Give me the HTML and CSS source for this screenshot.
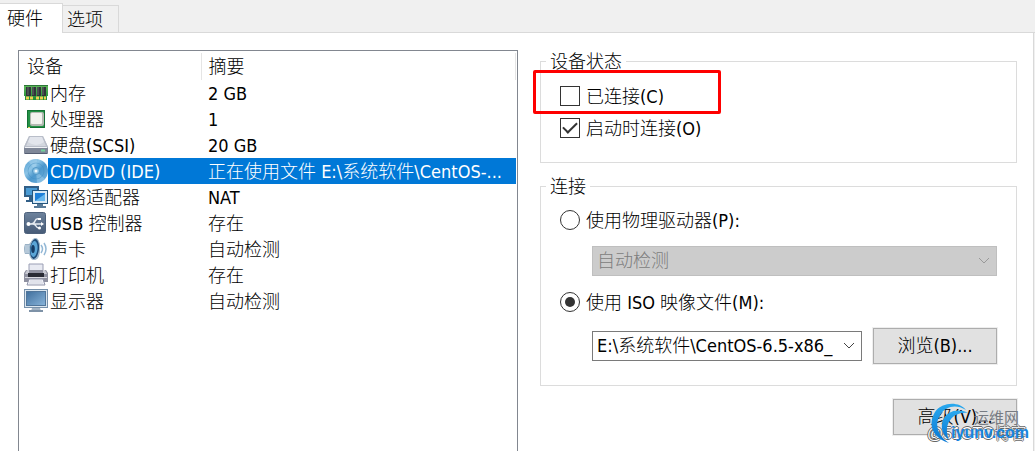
FILE: index.html
```html
<!DOCTYPE html>
<html lang="zh-CN">
<head>
<meta charset="utf-8">
<title>虚拟机设置</title>
<link rel="stylesheet" href="styles.css">
</head>
<body>
<svg class="defs" aria-hidden="true">
  <defs>
    <linearGradient id="gGreen" x1="0" y1="0" x2="0" y2="1"><stop offset="0" stop-color="#5fb85a"/><stop offset="1" stop-color="#1c8a34"/></linearGradient>
    <linearGradient id="gSilver" x1="0" y1="0" x2="0" y2="1"><stop offset="0" stop-color="#d3d7e0"/><stop offset="1" stop-color="#9298a8"/></linearGradient>
    <linearGradient id="gDisc" x1="0" y1="0" x2="1" y2="1"><stop offset="0" stop-color="#4f9bd0"/><stop offset=".35" stop-color="#8cc4e6"/><stop offset=".55" stop-color="#4c97cc"/><stop offset="1" stop-color="#77b6df"/></linearGradient>
    <linearGradient id="gScreen" x1="0" y1="0" x2="1" y2="1"><stop offset="0" stop-color="#42719f"/><stop offset="1" stop-color="#86b2d8"/></linearGradient>
    <linearGradient id="gUsb" x1="0" y1="0" x2="0" y2="1"><stop offset="0" stop-color="#6d829c"/><stop offset="1" stop-color="#465b77"/></linearGradient>
    <linearGradient id="gLogo" x1="0" y1="0" x2="0" y2="1"><stop offset="0" stop-color="#2aa9ee"/><stop offset="1" stop-color="#0877d4"/></linearGradient>
  </defs>
</svg>
<div class="dialog">
  <div class="tabs" role="tablist">
    <button class="tab tab-active" type="button" role="tab" aria-selected="true">硬件</button>
    <button class="tab" type="button" role="tab" aria-selected="false">选项</button>
  </div>
  <main class="panel">
    <section class="devices">
      <table class="device-table">
        <thead><tr><th class="col-device">设备</th><th>摘要</th></tr></thead>
        <tbody>
          <tr><td><div class="device"><svg class="icon" viewBox="0 0 24 24"><path d="M0 4h24v11h-1v4H1v-4H0z" fill="url(#gGreen)"/><path d="M0 4.500h24" stroke="#2c7637"/><path d="M2 6h5v9H2zM8 6h4v9H8zM13 6h4v9h-4zM18 6h4v9h-4z" fill="#30343a"/><path d="M4 6v8M9 6v8M14 6v8M19 6v8" stroke="#666d6a"/><path d="M2 17h8M12 17h10" stroke="#efcf52" stroke-width="3" stroke-dasharray="3 1"/></svg><span class="name">内存</span></div></td><td>2 GB</td></tr>
          <tr><td><div class="device"><svg class="icon" viewBox="0 0 24 24"><path d="M3 3h18v18H3z" fill="#249146"/><path d="M3.500 3.500h17v17h-17z" fill="none" stroke="#137133"/><path d="M4 20h2v1H4z" fill="#ead965"/><rect x="6" y="5" width="14" height="14" rx="2" fill="#b3bab2"/><rect x="7" y="6" width="11" height="11" rx="1" fill="#f2f3ef"/></svg><span class="name">处理器</span></div></td><td>1</td></tr>
          <tr><td><div class="device"><svg class="icon" viewBox="0 0 24 24"><path d="M5 3h14l5 11v7H0v-7z" fill="url(#gSilver)"/><path d="M5 3h14l5 11H0z" fill="#b9bec9"/><path d="M6 4h12l4 9H2z" fill="#d3d7df"/><path d="M6 4h12l2 5q-8 6-16 0z" fill="#e2e5ec"/><path d="M0 15h24v5H0z" fill="#7f8798"/><path d="M1 14.500h22" stroke="#f0f2f6"/><path d="M1 20.500h22" stroke="#555e72"/><path d="M17 17.500h4" stroke="#72d29a" stroke-width="2"/></svg><span class="name">硬盘(SCSI)</span></div></td><td>20 GB</td></tr>
          <tr class="selected" aria-selected="true"><td><div class="device"><svg class="icon" viewBox="0 0 24 24"><circle cx="12" cy="12" r="12" fill="url(#gDisc)"/><path d="M12 12 4 2A12 12 0 0 1 13 0zM12 12l9 8a12 12 0 0 1-8 4z" fill="#b7ddf2" opacity=".4"/><circle cx="12" cy="12" r="8" fill="none" stroke="#3e89bf" opacity=".4"/><circle cx="12" cy="12" r="3.500" fill="#8bc2e4" stroke="#4f95c5"/><circle cx="12" cy="12" r="1.500" fill="#eef7fc"/></svg><span class="name">CD/DVD (IDE)</span></div></td><td>正在使用文件 E:\系统软件\CentOS-...</td></tr>
          <tr><td><div class="device"><svg class="icon" viewBox="0 0 24 24"><path d="M0 1h15v11H0zM5 12h5v3H5zM2 15h8v2H2z" fill="#315f87"/><path d="M2 3h11v7H2z" fill="#4a9bd4"/><path d="M8 5h16v14H8z" fill="#24567f"/><path d="M9 6h14v12H9z" fill="#d7e9f5"/><path d="M11 8h10v8H11z" fill="#1f80d8"/><path d="M11 16 21 9v7z" fill="#65b7ee"/><path d="M13 19h6v2h3v2H10v-2h3z" fill="#577a98"/></svg><span class="name">网络适配器</span></div></td><td>NAT</td></tr>
          <tr><td><div class="device"><svg class="icon" viewBox="0 0 24 24"><rect x=".5" y="1.500" width="21" height="21" rx="2" fill="url(#gUsb)" stroke="#4d617b"/><path d="M4 13h14M7 13q3 0 4-3t4-2M9 13q2 0 3 2t3 2" fill="none" stroke="#e6ebf1" stroke-width="1.500"/><circle cx="4.500" cy="13" r="2" fill="#fff"/><path d="m17 11 3 2-3 2zM14 7h3v2h-3z" fill="#fff"/><circle cx="15.500" cy="17" r="1.500" fill="#fff"/></svg><span class="name">USB 控制器</span></div></td><td>存在</td></tr>
          <tr><td><div class="device"><svg class="icon" viewBox="0 0 24 24"><path d="M1 7h4l6-6q5 1 5 11t-5 11l-6-6H1Q-1 12 1 7z" fill="#9bb2c6"/><path d="M1 8h5v8H1z" fill="#b5c8d8"/><ellipse cx="10.500" cy="12" rx="5" ry="10.500" transform="rotate(6 10.500 12)" fill="#1d4b79" stroke="#a3bccf"/><ellipse cx="10" cy="12" rx="3.500" ry="8" transform="rotate(6 10 12)" fill="#5aa5d6"/><ellipse cx="9" cy="12" rx="1.800" ry="4" fill="#153c66"/><path d="M17 8q3 4 0 8M20 6q4 6 0 12" fill="none" stroke="#93b8d6" stroke-width="1.500"/></svg><span class="name">声卡</span></div></td><td>自动检测</td></tr>
          <tr><td><div class="device"><svg class="icon" viewBox="0 0 24 24"><path d="M5 1h14v10H5z" fill="#e8eaf2" stroke="#9a9eb4"/><path d="M2 7h20l2 3v9H0v-9z" fill="#8f91a0"/><path d="M3 7h2v3h14V7h2l2 4H1z" fill="#c9cad3"/><path d="M4 10h16v4H4z" fill="#292b35"/><path d="M1 14.500h22" stroke="#d8d9e0"/><path d="M5 16h14l2 6H3z" fill="#f1f2f7" stroke="#8f93a8"/><path d="M6 18h12M5 20h14" stroke="#d0d3df"/></svg><span class="name">打印机</span></div></td><td>存在</td></tr>
          <tr><td><div class="device"><svg class="icon" viewBox="0 0 24 24"><path d="M0 0h24v19H0z" fill="#7690aa"/><path d="M1 1h22v17H1z" fill="#dbe6ef"/><path d="M2 2h20v15H2z" fill="#50759a"/><path d="M3 3h18v13H3z" fill="url(#gScreen)"/><path d="M8 19h8l1 3H7z" fill="#a4b4c4"/><path d="M5 21h14v2H5z" fill="#7e92a7"/></svg><span class="name">显示器</span></div></td><td>自动检测</td></tr>
        </tbody>
      </table>
    </section>
    <form class="settings">
      <fieldset class="group group-status">
        <legend>设备状态</legend>
        <label class="choice marked"><input type="checkbox"><span>已连接(C)</span></label>
        <label class="choice"><input type="checkbox" checked><span>启动时连接(O)</span></label>
      </fieldset>
      <fieldset class="group group-link">
        <legend>连接</legend>
        <label class="choice"><input type="radio" name="source"><span>使用物理驱动器(P):</span></label>
        <div class="source-row">
          <div class="combo combo-disabled"><select aria-label="物理驱动器" disabled><option>自动检测</option></select><svg class="chevron" viewBox="0 0 12 8"><path d="m1 1 5 5 5-5"/></svg></div>
        </div>
        <label class="choice"><input type="radio" name="source" checked><span>使用 ISO 映像文件(M):</span></label>
        <div class="source-row">
          <div class="combo"><select aria-label="ISO 映像文件"><option>E:\系统软件\CentOS-6.5-x86_</option></select><svg class="chevron" viewBox="0 0 12 8"><path d="m1 1 5 5 5-5"/></svg></div>
          <button class="button" type="button">浏览(B)...</button>
        </div>
      </fieldset>
      <div class="actions">
        <button class="button" type="button">高级(V)...</button>
        <div class="watermark">
          <span class="wm-blog">@51CTO博客</span>
          <svg class="wm-logo" viewBox="0 0 40 42"><path d="M36 7C29-2 12-1 5 9c-8 13-2 26 14 31C8 33 4 22 10 12 16 3 26 1 36 7z" fill="url(#gLogo)"/><path d="M38 10C28 5 17 8 13 17c-3 8 0 15 6 20-3-7-3-14 1-20 4-5 10-8 18-7z" fill="url(#gLogo)"/></svg>
          <span class="wm-name">运维网</span>
          <span class="wm-site">iyunv.com</span>
        </div>
      </div>
    </form>
  </main>
</div>
</body>
</html>
```
FILE: styles.css
```css
*, *::before, *::after { box-sizing: border-box; }

body {
  margin: 0;
  background: #f0f0f0;
  color: #000;
  font: 18px/26px "DejaVu Sans Condensed", "Noto Sans CJK SC", sans-serif;
  font-weight: 300;
}

.defs { position: absolute; width: 0; height: 0; }

button, select { font: inherit; color: inherit; }

.dialog {
  display: flex;
  flex-direction: column;
  min-height: 100vh;
}

.tabs {
  display: flex;
  align-items: flex-end;
  height: 33px;
  box-shadow: inset 0 -1px #d9d9d9;
}

.tab {
  height: 28px;
  padding: 1px 15px 0 4px;
  border: 1px solid #d9d9d9;
  border-left: 0;
  background: #f0f0f0;
}

.tab-active {
  height: 30px;
  padding: 0 19px 0 7px;
  border-bottom: 0;
  background: #fff;
}

.panel {
  flex: 1;
  display: grid;
  grid-template-columns: 500fr 477fr;
  gap: 22px;
  margin-right: 1px;
  padding: 17px 16px 0 18px;
  border-right: 1px solid #d9d9d9;
  background: #fff;
}

.devices {
  padding: 2px 1px 0;
  border: 1px solid #828790;
  border-bottom: 0;
}

.device-table {
  width: 100%;
  table-layout: fixed;
  border-collapse: collapse;
}

.device-table th {
  height: 27px;
  padding: 0 7px;
  border-right: 1px solid #e5e5e5;
  font-weight: 300;
  text-align: left;
}

.col-device { width: 181px; }

.device-table td {
  height: 26px;
  padding: 0 0 0 7px;
  overflow: hidden;
  line-height: 24px;
  padding-top: 2px;
  white-space: nowrap;
}

.device-table td:first-child { padding: 0 0 0 4px; }

.device { display: flex; align-items: center; }

.icon { flex: none; width: 24px; height: 24px; }

.name { flex: 1; padding: 2px 0 0 2px; }

.selected { color: #fff; }

.selected .name, .selected td + td { background: #0078d7; }

.settings { min-width: 0; }

.group {
  display: flex;
  flex-direction: column;
  min-width: 0;
  margin: 0 0 13px;
  padding: 10px 19px 21px;
  border: 1px solid #dcdcdc;
}

.group legend {
  margin-left: -14px;
  padding: 0 4px;
  line-height: 23px;
}

.group-status { gap: 6px; margin-bottom: 12px; }

.group-link { gap: 13px; padding-top: 9px; }

.choice {
  display: flex;
  align-items: center;
  align-self: flex-start;
  gap: 6px;
}

.choice span { line-height: 24px; padding-top: 2px; }

.choice input {
  appearance: none;
  display: grid;
  place-items: center;
  width: 20px;
  height: 20px;
  margin: 0;
  border: 1px solid #333;
  background: #fff;
}

.choice input[type="radio"] { border-radius: 50%; }

.choice input[type="radio"]:checked::before {
  content: "";
  width: 10px;
  height: 10px;
  border-radius: 50%;
  background: #333;
}

.choice input[type="checkbox"]:checked::before {
  content: "";
  width: 14px;
  height: 8px;
  margin-bottom: 4px;
  border: solid #333;
  border-width: 0 0 2px 2px;
  transform: rotate(-45deg);
}

.marked { position: relative; }

.marked::after {
  content: "";
  position: absolute;
  left: -27px;
  top: -13px;
  width: 188px;
  height: 44px;
  border: 3px solid #fe0000;
  border-radius: 2px;
  pointer-events: none;
}

.source-row {
  display: flex;
  align-items: center;
  gap: 11px;
  padding-left: 32px;
}

.combo { position: relative; flex: 1; min-width: 0; }

.combo select {
  appearance: none;
  display: block;
  width: 100%;
  height: 30px;
  padding: 0 28px 0 4px;
  border: 1px solid #7a7a7a;
  border-radius: 0;
  background: #fff;
  opacity: 1;
}

.combo-disabled select {
  border-color: #bfbfbf;
  background: #ccc;
  color: #7d7d7d;
}

.chevron {
  position: absolute;
  right: 7px;
  top: 11px;
  width: 12px;
  height: 8px;
  fill: none;
  stroke: #444;
  pointer-events: none;
}

.combo-disabled .chevron { stroke: #999; }

.button {
  width: 124px;
  height: 36px;
  padding: 0;
  border: 1px solid #adadad;
  outline: 1px solid #eee;
  background: #e1e1e1;
}

.actions {
  position: relative;
  display: flex;
  justify-content: flex-end;
}

.watermark {
  position: absolute;
  right: -13px;
  top: 4px;
  width: 104px;
  height: 46px;
  line-height: 20px;
  pointer-events: none;
}

.watermark > * { position: absolute; white-space: nowrap; }

.wm-blog {
  left: 1px;
  top: 21px;
  color: #fff;
  font-family: "Liberation Sans", "Noto Sans CJK SC", sans-serif;
  font-size: 16px;
  text-shadow: 1px 0 #666, -1px 0 #666, 0 1px #666, 0 -1px #666;
}

.wm-logo { left: 4px; top: 0; width: 40px; height: 42px; }

.wm-name {
  right: 11px;
  top: 4px;
  color: #777b82;
  font-family: "Noto Sans CJK SC", sans-serif;
  font-size: 15px;
  font-weight: 400;
}

.wm-site {
  right: 1px;
  top: 20px;
  color: #1685df;
  font-family: "Liberation Sans", sans-serif;
  font-size: 16px;
  font-weight: 700;
}
```
